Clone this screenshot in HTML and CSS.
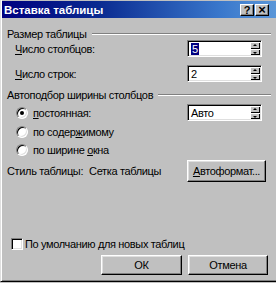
FILE: index.html
```html
<!DOCTYPE html>
<html lang="ru">
<head>
<meta charset="utf-8">
<link rel="stylesheet" href="styles.css">
</head>
<body>
<div class="dialog">
  <div class="titlebar">
    <span class="title">Вставка таблицы</span>
    <div class="tbtns">
      <span class="tbtn">?</span>
      <span class="tbtn close">×</span>
    </div>
  </div>
  <div class="content">
    <div class="group g1"><span>Размер таблицы</span><i class="rule"></i></div>
    <div class="row r1">
      <span class="label"><u>Ч</u>исло столбцов:</span>
      <div class="spin"><div class="field"><span class="sel">5</span></div><div class="arrows"><b class="up"></b><b class="down"></b></div></div>
    </div>
    <div class="row r2">
      <span class="label"><u>Ч</u>исло строк:</span>
      <div class="spin"><div class="field"><span>2</span></div><div class="arrows"><b class="up"></b><b class="down"></b></div></div>
    </div>
    <div class="group g2"><span>Автоподбор ширины столбцов</span><i class="rule"></i></div>
    <div class="row rr1">
      <label class="radio"><i class="dot on"></i><span><u>п</u>остоянная:</span></label>
      <div class="spin"><div class="field"><span>Авто</span></div><div class="arrows"><b class="up"></b><b class="down"></b></div></div>
    </div>
    <div class="row rr2">
      <label class="radio"><i class="dot"></i><span>по содер<u>ж</u>имому</span></label>
    </div>
    <div class="row rr3">
      <label class="radio"><i class="dot"></i><span>по ширине <u>о</u>кна</span></label>
    </div>
    <div class="row style">
      <span class="label plain">Стиль таблицы:<span class="stylename">Сетка таблицы</span></span>
      <span class="btn auto"><u>А</u>втоформат...</span>
    </div>
    <div class="spacer"></div>
    <label class="check"><i class="box"></i><span>По умолчанию для новых таблиц</span></label>
    <div class="buttons">
      <span class="btn ok">ОК</span>
      <span class="btn cancel">Отмена</span>
    </div>
  </div>
</div>
</body>
</html>
```
FILE: styles.css
```css
html, body {
  margin: 0;
  padding: 0;
  background: #c0c0c0;
}
body {
  font-family: "Liberation Sans", Arial, sans-serif;
  font-size: 11px;
  letter-spacing: -0.35px;
  color: #000;
}
u { text-decoration: underline; text-underline-offset: 1px; }

.dialog {
  width: 276px;
  height: 282px;
  box-sizing: border-box;
  background: #c0c0c0;
  border-left: 1px solid #dfdfdf;
  border-bottom: 1px solid #000;
  box-shadow: inset 1px 0 #fff, inset 0 -1px #808080;
  padding: 1px 0 0 1px;
  display: flex;
  flex-direction: column;
}

.titlebar {
  height: 17px;
  background: linear-gradient(to right, #000080 0%, #0a2a90 35%, #3a78cc 80%, #5a96d8 100%);
  display: flex;
  align-items: center;
  justify-content: space-between;
  padding: 0 7px 0 2px;
}
.title {
  color: #fff;
  font-weight: bold;
  font-size: 11.5px;
  letter-spacing: 0;
}
.tbtns {
  display: flex;
  gap: 1px;
}
.tbtn {
  width: 14px;
  height: 12px;
  box-sizing: border-box;
  background: #c0c0c0;
  border-top: 1px solid #fff;
  border-left: 1px solid #fff;
  border-right: 1px solid #000;
  border-bottom: 1px solid #000;
  box-shadow: inset -1px -1px #808080;
  font-weight: bold;
  font-size: 11px;
  letter-spacing: 0;
  line-height: 10px;
  text-align: center;
}
.tbtn.close { font-size: 13px; line-height: 9px; }

.content {
  flex: 1;
  display: flex;
  flex-direction: column;
  padding: 0 5px 6px 5px;
}

.group {
  display: flex;
  align-items: center;
  height: 13px;
  gap: 5px;
}
.group .rule {
  flex: 1;
  height: 0;
  border-top: 1px solid #808080;
  border-bottom: 1px solid #fff;
}
.g1 { margin-top: 9px; }
.g2 { margin-top: 6px; }

.row {
  display: grid;
  grid-template-columns: 180px 75px;
  align-items: center;
  height: 17px;
}
.r1 { margin-top: 0; }
.r2 { margin-top: 8px; }
.rr1 { margin-top: 3px; }
.rr2 { margin-top: 2px; }
.rr3 { margin-top: 1px; }
.row.style {
  grid-template-columns: 180px 79px;
  height: 22px;
  margin-top: 2px;
}

.label { padding-left: 8px; }
.label.plain { padding-left: 0; display: flex; }
.stylename { margin-left: 6px; }

.spin {
  height: 17px;
  box-sizing: border-box;
  background: #fff;
  border-top: 1px solid #808080;
  border-left: 1px solid #808080;
  border-right: 1px solid #fff;
  border-bottom: 1px solid #fff;
  box-shadow: inset 1px 1px #000, inset -1px -1px #dfdfdf;
  display: flex;
  padding: 2px 1px 1px 2px;
}
.field {
  flex: 1;
  display: flex;
  align-items: center;
  padding-left: 1px;
  line-height: 12px;
}
.sel {
  background: #000080;
  color: #fff;
  padding: 0 1px;
}
.arrows {
  width: 10px;
  display: flex;
  flex-direction: column;
  margin-top: -1px;
}
.arrows b {
  flex: 1;
  background: #c0c0c0;
  box-shadow: inset 1px 1px #fff, inset -1px -1px #000;
  position: relative;
}
.arrows b::after {
  content: "";
  position: absolute;
  left: 3px;
  width: 0;
  height: 0;
  border-left: 2px solid transparent;
  border-right: 2px solid transparent;
}
.arrows .up::after { top: 2px; border-bottom: 2px solid #000; }
.arrows .down::after { top: 3px; border-top: 2px solid #000; }

.radio {
  display: flex;
  align-items: center;
  gap: 5px;
  padding-left: 9px;
}
.dot {
  width: 12px;
  height: 12px;
  box-sizing: border-box;
  border-radius: 50%;
  background: #fff;
  border: 1px solid;
  border-color: #808080 #fff #fff #808080;
  box-shadow: inset 1px 1px #000, inset -1px -1px #dfdfdf;
  position: relative;
}
.dot.on::after {
  content: "";
  position: absolute;
  left: 3px;
  top: 3px;
  width: 4px;
  height: 4px;
  border-radius: 50%;
  background: #000;
}

.btn {
  box-sizing: border-box;
  height: 22px;
  display: flex;
  align-items: center;
  justify-content: center;
  background: #c0c0c0;
  border-top: 1px solid #fff;
  border-left: 1px solid #fff;
  border-right: 1px solid #000;
  border-bottom: 1px solid #000;
  box-shadow: inset -1px -1px #808080, inset 1px 1px #dfdfdf;
}

.spacer { flex: 1; }

.check {
  display: flex;
  align-items: center;
  gap: 2px;
  height: 13px;
  padding-left: 4px;
}
.box {
  width: 12px;
  height: 12px;
  box-sizing: border-box;
  background: #fff;
  border: 1px solid;
  border-color: #808080 #fff #fff #808080;
  box-shadow: inset 1px 1px #000, inset -1px -1px #dfdfdf;
}

.buttons {
  display: flex;
  justify-content: flex-end;
  gap: 6px;
  margin-top: 5px;
  padding-right: 3px;
}
.buttons .btn { height: 20px; }
.ok { width: 81px; }
.cancel { width: 80px; }
```
